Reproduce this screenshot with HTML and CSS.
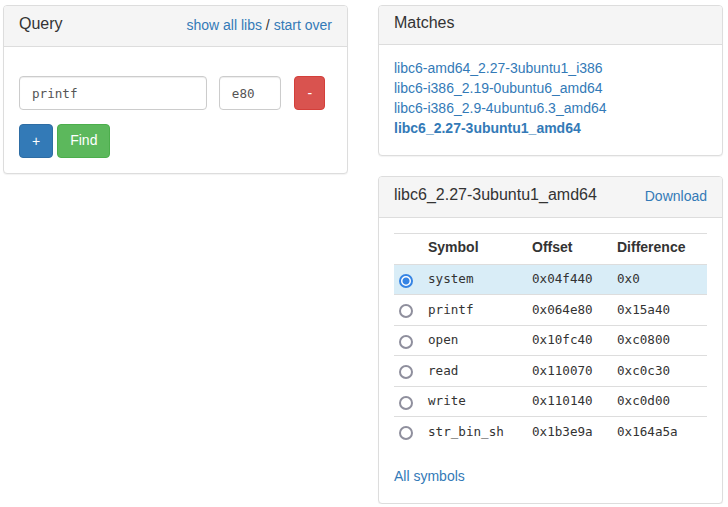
FILE: index.html
```html
<!DOCTYPE html>
<html lang="en">
<head>
<meta charset="utf-8">
<meta name="viewport" content="width=device-width, initial-scale=1">
<title>libc database search</title>
<link rel="stylesheet" href="styles.css">
</head>
<body>
<main class="columns">
  <section class="panel">
    <header class="panel-heading">
      <h2 class="panel-title">Query</h2>
      <span class="panel-links"><a href="#libs">show all libs</a> / <a href="#reset">start over</a></span>
    </header>
    <form class="panel-body query">
      <div class="query-row">
        <input class="field field-symbol" type="text" aria-label="Symbol name" value="printf">
        <input class="field field-address" type="text" aria-label="Address" value="e80">
        <button class="btn btn-danger" type="button">-</button>
      </div>
      <div class="actions">
        <button class="btn btn-primary" type="button">+</button>
        <button class="btn btn-success" type="button">Find</button>
      </div>
    </form>
  </section>

  <div class="results">
    <section class="panel">
      <header class="panel-heading panel-heading-plain">
        <h2 class="panel-title">Matches</h2>
      </header>
      <div class="panel-body panel-body-list">
        <ul class="matches">
          <li><a href="#m1">libc6-amd64_2.27-3ubuntu1_i386</a></li>
          <li><a href="#m2">libc6-i386_2.19-0ubuntu6_amd64</a></li>
          <li><a href="#m3">libc6-i386_2.9-4ubuntu6.3_amd64</a></li>
          <li><a class="selected" href="#m4">libc6_2.27-3ubuntu1_amd64</a></li>
        </ul>
      </div>
    </section>

    <section class="panel">
      <header class="panel-heading">
        <h2 class="panel-title">libc6_2.27-3ubuntu1_amd64</h2>
        <a class="panel-links" href="#download">Download</a>
      </header>
      <div class="panel-body">
        <table class="symbols">
          <colgroup><col class="col-pick"><col class="col-symbol"><col class="col-offset"><col></colgroup>
          <thead>
            <tr><th></th><th>Symbol</th><th>Offset</th><th>Difference</th></tr>
          </thead>
          <tbody>
            <tr class="info"><td><input type="radio" name="base" id="system" checked></td><td><label for="system">system</label></td><td>0x04f440</td><td>0x0</td></tr>
            <tr><td><input type="radio" name="base" id="printf"></td><td><label for="printf">printf</label></td><td>0x064e80</td><td>0x15a40</td></tr>
            <tr><td><input type="radio" name="base" id="open"></td><td><label for="open">open</label></td><td>0x10fc40</td><td>0xc0800</td></tr>
            <tr><td><input type="radio" name="base" id="read"></td><td><label for="read">read</label></td><td>0x110070</td><td>0xc0c30</td></tr>
            <tr><td><input type="radio" name="base" id="write"></td><td><label for="write">write</label></td><td>0x110140</td><td>0xc0d00</td></tr>
            <tr><td><input type="radio" name="base" id="binsh"></td><td><label for="binsh">str_bin_sh</label></td><td>0x1b3e9a</td><td>0x164a5a</td></tr>
          </tbody>
        </table>
        <a class="all-symbols" href="#all">All symbols</a>
      </div>
    </section>
  </div>
</main>
</body>
</html>
```

FILE: styles.css
```css
* { box-sizing: border-box; }

body {
  margin: 0;
  background: #fff;
  color: #333;
  font: 14px/20px "Liberation Sans", Arial, sans-serif;
}

a { color: #337ab7; text-decoration: none; }

.columns {
  display: grid;
  grid-template-columns: minmax(0, 1fr) minmax(0, 1fr);
  align-items: start;
  gap: 30px;
  padding: 5px 5px 0 3px;
}

.results { display: grid; gap: 20px; }

.panel {
  border: 1px solid #ddd;
  border-radius: 4px;
  background: #fff;
  box-shadow: 0 1px 1px rgba(0, 0, 0, .05);
}

.panel-heading {
  display: flex;
  justify-content: space-between;
  padding: 9px 15px 11px;
  border-bottom: 1px solid #ddd;
  border-radius: 3px 3px 0 0;
  background: #f5f5f5;
}
.panel-heading-plain { padding: 8px 15px 12px; }

.panel-title { margin: 0; font-size: 16px; font-weight: 400; line-height: 18px; }
.panel-links { line-height: 20px; }
.panel-body { padding: 15px; }
.panel-body-list { padding: 13px 15px 17px; }

/* Query form */
.query { padding-top: 29px; }
.query-row { display: flex; gap: 12px; margin-bottom: 14px; }
.actions { display: flex; gap: 4px; }

.field {
  height: 34px;
  min-width: 0;
  padding: 6px 12px;
  border: 1px solid #ccc;
  border-radius: 4px;
  background: #fff;
  color: #555;
  font-family: "DejaVu Sans Mono", monospace;
  font-size: .9em;
  line-height: 20px;
  box-shadow: inset 0 1px 1px rgba(0, 0, 0, .075);
}
.field-symbol { width: 60%; }
.field-address { width: 20%; }

.btn {
  padding: 6px 12px;
  border: 1px solid;
  border-radius: 4px;
  color: #fff;
  font: inherit;
}
.btn-danger {
  margin-left: 1px;
  border-color: #d43f3a;
  background: #d9534f;
}
.btn-primary { border-color: #2e6da4; background: #337ab7; }
.btn-success {
  padding: 5px 12px 7px;
  border-color: #4cae4c;
  background: #5cb85c;
}

.matches { margin: 0; padding: 0; list-style: none; }
.selected { font-weight: 700; }

/* Symbol table */
.symbols {
  width: 100%;
  margin-bottom: 19px;
  border-spacing: 0;
  table-layout: fixed;
}
.col-pick { width: 29px; }
.col-symbol { width: 104px; }
.col-offset { width: 85px; }
.symbols th, .symbols td {
  border-top: 1px solid #ddd;
  text-align: left;
  vertical-align: top;
}
.symbols th { padding: 3px 5px 7px; }
.symbols td {
  height: 30px;
  padding: 4px 5px;
  font-family: "DejaVu Sans Mono", monospace;
  font-size: .9em;
}
.symbols tr:nth-child(even) td { height: 31px; padding-top: 5px; }
.info td { background: #d9edf7; }
.all-symbols { display: block; margin-bottom: 2px; }

.symbols input {
  display: block;
  appearance: none;
  width: 14px;
  height: 14px;
  margin: 5px 0 0;
  border: 2px solid #8f8f9d;
  border-radius: 50%;
  background: #fff;
}
.symbols tr:nth-child(even) input { margin-top: 4px; }
.symbols input:checked {
  border-color: #3584e4;
  background: radial-gradient(circle, #3584e4 3px, #fff 4px);
}
```
